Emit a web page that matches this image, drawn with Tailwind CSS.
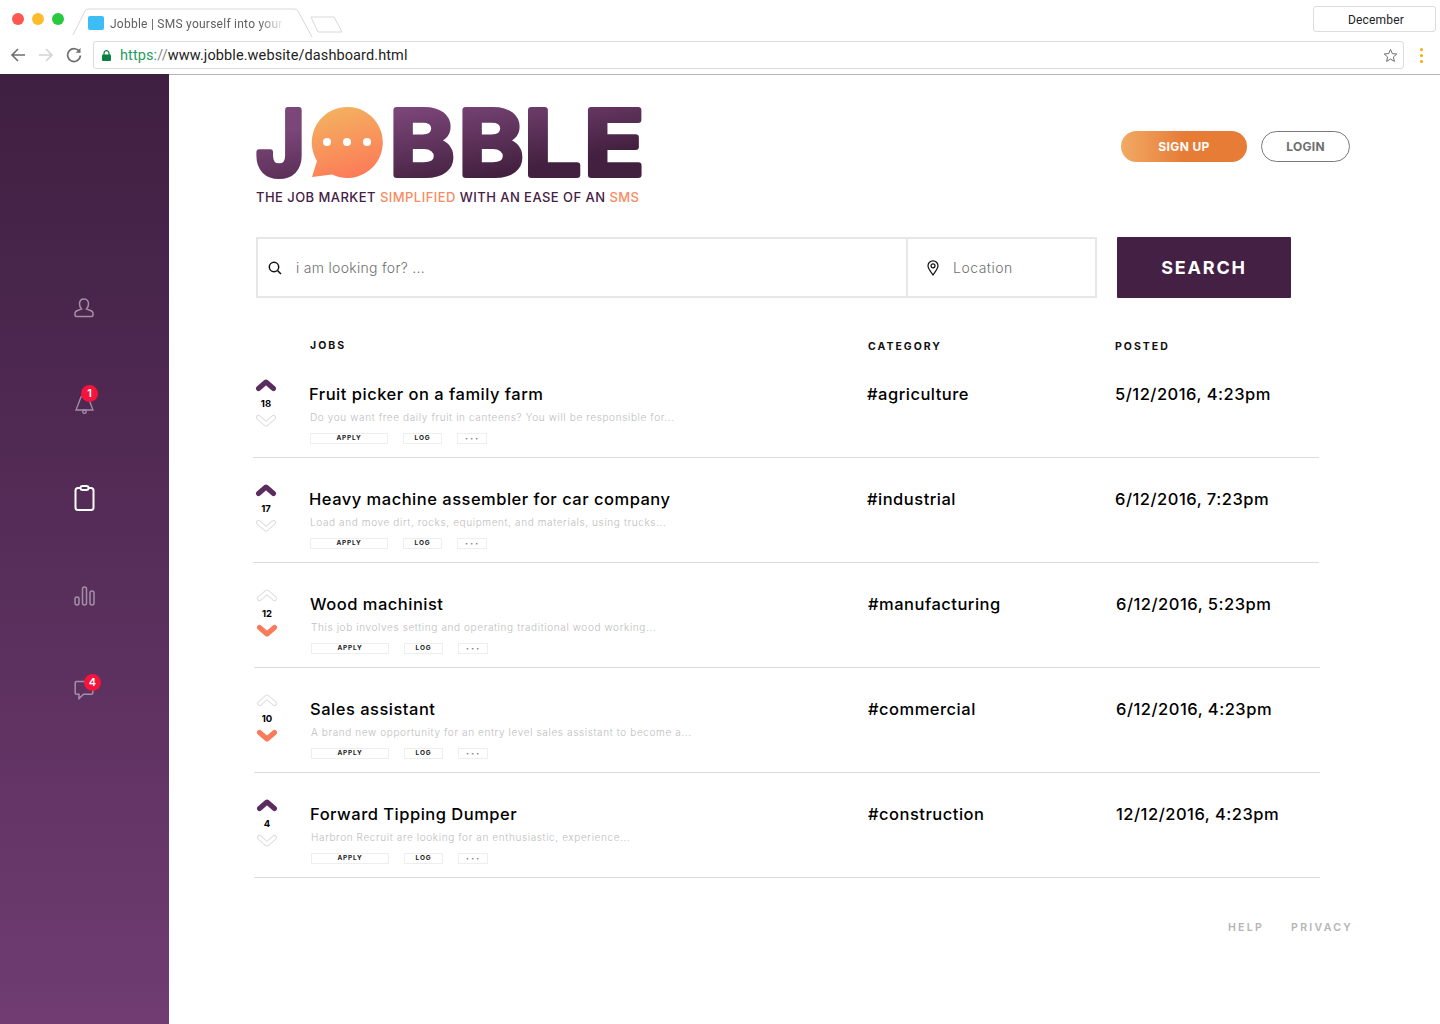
<!DOCTYPE html>
<html lang="en">
<head>
  <meta charset="UTF-8" />
  <title>Jobble | SMS yourself into your next job</title>
  <script src="https://cdn.jsdelivr.net/npm/@tailwindcss/browser@4"></script>
</head>
<body class="bg-white w-[1440px] h-[1024px] overflow-hidden font-['Inter',sans-serif] text-black">

  <!-- browser chrome -->
  <div class="h-[74px] bg-white font-['Roboto',sans-serif]">
    <div class="h-[41px] flex">
      <div class="flex gap-2 pl-3 pt-[13px]">
        <span class="w-3 h-3 rounded-full bg-[#fc5753]"></span>
        <span class="w-3 h-3 rounded-full bg-[#fdbc2c]"></span>
        <span class="w-3 h-3 rounded-full bg-[#2ac840]"></span>
      </div>
      <div class="relative ml-[8px] w-[272px] h-[41px]">
        <svg class="absolute left-0 top-0" width="272" height="41" fill="none" stroke="#d8d8d8">
          <path d="M1 35 L13 11 Q14 9 17 9 L222 9 Q225 9 226 11 L240 37" />
          <path d="M239 17 L262 17 L270 32 L246 32 Z" />
        </svg>
        <div class="absolute left-[16px] top-[16px] w-4 h-[14px] rounded-[2px] bg-[#3cbdf5]"></div>
        <div class="absolute left-[38px] top-[16px] w-[175px] h-4 overflow-hidden whitespace-nowrap text-[12px] leading-[16px] tracking-[0.25px] text-[#5f5f5f] [mask-image:linear-gradient(to_right,black_85%,transparent)]">Jobble | SMS yourself into your</div>
      </div>
      <div class="ml-auto mr-1 mt-[6px] w-[123px] h-[26px] border border-[#dcdcdc] rounded-[3px] flex items-center justify-center pl-[3px] pt-px text-[12px] tracking-[0.2px] text-[#222]">December</div>
    </div>
    <div class="h-[28px] flex items-center">
      <svg class="ml-[10px]" width="16" height="16" viewBox="0 0 16 16" fill="none" stroke="#6e6e6e" stroke-width="1.6"><path d="M15 8 H2 M8 2 L2 8 L8 14" /></svg>
      <svg class="ml-[12px]" width="16" height="16" viewBox="0 0 16 16" fill="none" stroke="#d4d4d4" stroke-width="1.6"><path d="M1 8 H14 M8 2 L14 8 L8 14" /></svg>
      <svg class="ml-[12px]" width="16" height="16" viewBox="0 0 16 16" fill="none" stroke="#6e6e6e" stroke-width="1.7"><path d="M13.6 5 A6.4 6.4 0 1 0 14.4 8.5" /><path d="M14.5 1 V5.8 H9.7" fill="#6e6e6e" stroke="none" /></svg>
      <div class="ml-[11px] w-[1311px] h-[28px] border border-[#dcdcdc] rounded-[3px] flex items-center">
        <svg class="ml-[8px]" width="9" height="11" viewBox="0 0 9 11"><path d="M2 5 V3.2 a2.5 2.5 0 0 1 5 0 V5" fill="none" stroke="#0b8043" stroke-width="1.2" /><rect y="4.5" width="9" height="6.5" rx="1" fill="#0b8043" /></svg>
        <div class="ml-[9px] pt-px text-[14.5px] tracking-[0.1px] text-[#222]"><span class="text-[#1f9d61]">https:</span><span class="text-[#888]">//</span>www.jobble.website/dashboard.html</div>
        <svg class="ml-auto mr-[5px]" width="15" height="15" viewBox="0 0 15 15" fill="none" stroke="#6e6e6e"><path d="M7.5 1.5 L9.3 5.6 L13.8 6 L10.4 9 L11.4 13.4 L7.5 11.1 L3.6 13.4 L4.6 9 L1.2 6 L5.7 5.6 Z" /></svg>
      </div>
      <div class="ml-[16px] flex flex-col gap-[3px]">
        <span class="w-[3px] h-[3px] rounded-full bg-[#f5a800]"></span>
        <span class="w-[3px] h-[3px] rounded-full bg-[#f5a800]"></span>
        <span class="w-[3px] h-[3px] rounded-full bg-[#f5a800]"></span>
      </div>
    </div>
  </div>

  <div class="flex h-[950px]">
    <!-- sidebar -->
    <aside class="w-[169px] shrink-0 bg-gradient-to-b from-[#3e1f41] to-[#703c72] flex flex-col items-center pr-px pt-[214px] text-[#a48fa8]">
      <div class="h-10 w-10 flex items-center justify-center">
        <svg width="20" height="20" viewBox="0 0 20 20" fill="none" stroke="currentColor" stroke-width="1.5"><path d="M10 1 C7 1 5.5 3.2 5.5 6 C5.5 8.5 6.6 10 7.5 11 L3.5 12.5 C2 13 1 14 1 15.5 V17 Q1 18.5 2.5 18.5 H17.5 Q19 18.5 19 17 V15.5 C19 14 18 13 16.5 12.5 L12.5 11 C13.4 10 14.5 8.5 14.5 6 C14.5 3.2 13 1 10 1 Z" /></svg>
      </div>
      <div class="relative h-10 w-10 mt-[54px] flex items-center justify-center">
        <svg class="mt-[3px]" width="19" height="20" viewBox="0 0 19 20" fill="none" stroke="currentColor" stroke-width="1.3"><path d="M6 3 Q9.5 0 13 3 L18 16 H1 Z" /><circle cx="9.5" cy="17.7" r="1.7" /></svg>
        <span class="absolute left-[17px] top-[3px] w-[17px] h-[17px] rounded-full bg-[#f5143c] text-white text-[11px] leading-[17px] font-semibold text-center">1</span>
      </div>
      <div class="h-10 w-10 mt-[56px] flex items-center justify-center text-white">
        <svg width="21" height="26" viewBox="0 0 21 26" fill="none" stroke="currentColor" stroke-width="2"><rect x="1.5" y="3" width="18" height="22" rx="2.5" /><rect x="6.5" y="1" width="8" height="4" rx="2" fill="#55295a" /></svg>
      </div>
      <div class="h-10 w-10 mt-[58px] flex items-center justify-center">
        <svg width="21" height="20" viewBox="0 0 21 20" fill="none" stroke="currentColor" stroke-width="1.5"><rect x="1" y="11" width="4" height="8" rx="2" /><rect x="8.5" y="1" width="4" height="18" rx="2" /><rect x="16" y="5" width="4" height="14" rx="2" /></svg>
      </div>
      <div class="relative h-10 w-10 mt-[54px] flex items-center justify-center">
        <svg width="20" height="20" viewBox="0 0 20 20" fill="none" stroke="currentColor" stroke-width="1.5"><path d="M2.5 1.5 H17.5 Q18.8 1.5 18.8 2.8 V13 Q18.8 14.3 17.5 14.3 H9.5 L5 18.6 V14.3 H2.5 Q1.2 14.3 1.2 13 V2.8 Q1.2 1.5 2.5 1.5 Z" /></svg>
        <span class="absolute left-[20px] top-[4px] w-[17px] h-[17px] rounded-full bg-[#f5143c] text-white text-[11px] leading-[17px] font-semibold text-center">4</span>
      </div>
    </aside>

    <!-- main -->
    <main class="flex-1 border-t border-[#b5b5b5] pl-[85px]">
      <div class="flex items-start justify-between pr-[90px] pl-[2px]">
        <div>
          <svg class="mt-[26px]" width="392" height="80" viewBox="0 0 392 80" role="img" aria-label="Jobble">
            <defs>
              <linearGradient id="word" gradientUnits="userSpaceOnUse" x1="190" y1="0" x2="205" y2="80">
                <stop offset="0" stop-color="#7b4679" />
                <stop offset="1" stop-color="#43203f" />
              </linearGradient>
              <linearGradient id="bubble" x1="0.35" y1="0" x2="0.65" y2="1">
                <stop offset="0" stop-color="#f4b160" />
                <stop offset="1" stop-color="#fc7a58" />
              </linearGradient>
            </defs>
            <g font-family="Inter, sans-serif" font-weight="600" font-size="90" fill="url(#word)" stroke="url(#word)" stroke-width="6" stroke-linejoin="round">
              <text x="0" y="74" textLength="49" lengthAdjust="spacingAndGlyphs">J</text>
              <text x="133.5" y="74" textLength="65" lengthAdjust="spacingAndGlyphs">B</text>
              <text x="202.5" y="74" textLength="65" lengthAdjust="spacingAndGlyphs">B</text>
              <text x="268" y="74" textLength="57" lengthAdjust="spacingAndGlyphs">L</text>
              <text x="328" y="74" textLength="60" lengthAdjust="spacingAndGlyphs">E</text>
            </g>
            <path d="M76 73.5 A35.5 35.5 0 1 0 61 60 L56 76 Z" fill="url(#bubble)" />
            <circle cx="71" cy="41" r="4" fill="#fff" />
            <circle cx="91" cy="41" r="4" fill="#fff" />
            <circle cx="111" cy="41" r="4" fill="#fff" />
          </svg>
          <p class="mt-[8px] text-[13px] leading-4 font-medium tracking-[0.45px] whitespace-nowrap text-[#452045]">THE JOB MARKET <span class="text-[#fb8a60]">SIMPLIFIED</span> WITH AN EASE OF AN <span class="text-[#fb8a60]">SMS</span></p>
        </div>
        <div class="flex gap-[14px] mt-[56px]">
          <button class="w-[126px] h-[31px] rounded-full bg-gradient-to-r from-[#f1aa64] via-[#e67c36] to-[#e67c36] text-white text-[12px] font-bold tracking-[0.4px]">SIGN UP</button>
          <button class="w-[89px] h-[31px] rounded-full border border-[#7a7a7a] text-[#6e6e6e] text-[12px] font-bold tracking-[0.3px]">LOGIN</button>
        </div>
      </div>

      <!-- search -->
      <div class="flex mt-[32px] ml-[2px]">
        <div class="w-[841px] h-[61px] border-2 border-[#e7e7e7] flex">
          <div class="w-[650px] border-r-2 border-[#e7e7e7] flex items-center">
            <svg class="ml-[10px]" width="14" height="14" viewBox="0 0 14 14" fill="none" stroke="#111" stroke-width="1.5"><circle cx="6" cy="6" r="4.7" /><path d="M9.5 9.5 L13 13" /></svg>
            <span class="ml-[14px] text-[14px] font-light tracking-[0.3px] text-[#6f6f6f]">i am looking for? ...</span>
          </div>
          <div class="flex-1 flex items-center">
            <svg class="ml-[19px]" width="12" height="16" viewBox="0 0 12 16" fill="none" stroke="#111" stroke-width="1.2"><path d="M6 15 C4 12 1 8.8 1 5.8 A5 5 0 0 1 11 5.8 C11 8.8 8 12 6 15 Z" /><circle cx="6" cy="5.8" r="2" /></svg>
            <span class="ml-[14px] text-[14px] font-light tracking-[0.5px] text-[#6f6f6f]">Location</span>
          </div>
        </div>
        <button class="ml-[20px] w-[174px] h-[61px] rounded-[1px] bg-[#452045] text-white text-[18px] font-bold tracking-[1.8px]">SEARCH</button>
      </div>

      <div class="w-[1066px]">
        <!-- column heads -->
        <div class="flex mt-[42px] h-[13px] items-center text-[10.5px] font-bold tracking-[2px] text-[#111]">
          <div class="w-[614px] pl-[56px] -mt-[2px]">JOBS</div>
          <div class="w-[247px]">CATEGORY</div>
          <div>POSTED</div>
        </div>

        <!-- row 1 -->
        <div class="flex h-[105px] border-b border-[#dcdcdc] -ml-px mr-px">
          <div class="w-[26px] mr-[30px] pt-[25px] flex flex-col items-center">
            <svg width="22" height="14" viewBox="0 0 22 14" fill="none" stroke-linecap="round" stroke-linejoin="round"><path d="M3.5 10.5 L11 4 L18.5 10.5" stroke="#5a2d5e" stroke-width="5" /></svg>
            <span class="mt-[6px] h-3 text-[9.5px] leading-3 font-bold">18</span>
            <svg class="mt-[4px]" width="22" height="14" viewBox="0 0 22 14" fill="none" stroke-linecap="round" stroke-linejoin="round"><path d="M3.5 3.5 L11 10 L18.5 3.5" stroke="#dedede" stroke-width="5" /><path d="M3.5 3.5 L11 10 L18.5 3.5" stroke="#fff" stroke-width="3" /></svg>
          </div>
          <div class="w-[558px] pt-[30px]">
            <h2 class="h-[22px] text-[16.5px] leading-[22px] font-medium tracking-[0.5px]">Fruit picker on a family farm</h2>
            <p class="mt-[5px] ml-px h-[14px] text-[10px] leading-[14px] font-light tracking-[0.62px] text-[#bdbdbd]">Do you want free daily fruit in canteens? You will be responsible for...</p>
            <div class="mt-[9px] ml-px flex text-[6.5px] font-bold tracking-[0.8px] text-[#222]">
              <span class="w-[78px] h-[11px] border border-[#eee] flex items-center justify-center">APPLY</span>
              <span class="ml-[15px] w-[39px] h-[11px] border border-[#eee] flex items-center justify-center">LOG</span>
              <span class="ml-[15px] w-[30px] h-[11px] border border-[#eee] flex items-center justify-center text-[5px] text-[#777]">• • •</span>
            </div>
          </div>
          <div class="w-[248px] pt-[30px] text-[16.5px] leading-[22px] font-medium tracking-[0.5px]">#agriculture</div>
          <div class="pt-[30px] text-[16.5px] leading-[22px] font-medium tracking-[0.5px]">5/12/2016, 4:23pm</div>
        </div>

        <!-- row 2 -->
        <div class="flex h-[105px] border-b border-[#dcdcdc] -ml-px mr-px">
          <div class="w-[26px] mr-[30px] pt-[25px] flex flex-col items-center">
            <svg width="22" height="14" viewBox="0 0 22 14" fill="none" stroke-linecap="round" stroke-linejoin="round"><path d="M3.5 10.5 L11 4 L18.5 10.5" stroke="#5a2d5e" stroke-width="5" /></svg>
            <span class="mt-[6px] h-3 text-[9.5px] leading-3 font-bold">17</span>
            <svg class="mt-[4px]" width="22" height="14" viewBox="0 0 22 14" fill="none" stroke-linecap="round" stroke-linejoin="round"><path d="M3.5 3.5 L11 10 L18.5 3.5" stroke="#dedede" stroke-width="5" /><path d="M3.5 3.5 L11 10 L18.5 3.5" stroke="#fff" stroke-width="3" /></svg>
          </div>
          <div class="w-[558px] pt-[30px]">
            <h2 class="h-[22px] text-[16.5px] leading-[22px] font-medium tracking-[0.5px]">Heavy machine assembler for car company</h2>
            <p class="mt-[5px] ml-px h-[14px] text-[10px] leading-[14px] font-light tracking-[0.62px] text-[#bdbdbd]">Load and move dirt, rocks, equipment, and materials, using trucks...</p>
            <div class="mt-[9px] ml-px flex text-[6.5px] font-bold tracking-[0.8px] text-[#222]">
              <span class="w-[78px] h-[11px] border border-[#eee] flex items-center justify-center">APPLY</span>
              <span class="ml-[15px] w-[39px] h-[11px] border border-[#eee] flex items-center justify-center">LOG</span>
              <span class="ml-[15px] w-[30px] h-[11px] border border-[#eee] flex items-center justify-center text-[5px] text-[#777]">• • •</span>
            </div>
          </div>
          <div class="w-[248px] pt-[30px] text-[16.5px] leading-[22px] font-medium tracking-[0.5px]">#industrial</div>
          <div class="pt-[30px] text-[16.5px] leading-[22px] font-medium tracking-[0.5px]">6/12/2016, 7:23pm</div>
        </div>

        <!-- row 3 -->
        <div class="flex h-[105px] border-b border-[#dcdcdc]">
          <div class="w-[26px] mr-[30px] pt-[25px] flex flex-col items-center">
            <svg width="22" height="14" viewBox="0 0 22 14" fill="none" stroke-linecap="round" stroke-linejoin="round"><path d="M3.5 10.5 L11 4 L18.5 10.5" stroke="#dedede" stroke-width="5" /><path d="M3.5 10.5 L11 4 L18.5 10.5" stroke="#fff" stroke-width="3" /></svg>
            <span class="mt-[6px] h-3 text-[9.5px] leading-3 font-bold">12</span>
            <svg class="mt-[4px]" width="22" height="14" viewBox="0 0 22 14" fill="none" stroke-linecap="round" stroke-linejoin="round"><path d="M3.5 3.5 L11 10 L18.5 3.5" stroke="#fb7a5a" stroke-width="5" /></svg>
          </div>
          <div class="w-[558px] pt-[30px]">
            <h2 class="h-[22px] text-[16.5px] leading-[22px] font-medium tracking-[0.5px]">Wood machinist</h2>
            <p class="mt-[5px] ml-px h-[14px] text-[10px] leading-[14px] font-light tracking-[0.62px] text-[#bdbdbd]">This job involves setting and operating traditional wood working...</p>
            <div class="mt-[9px] ml-px flex text-[6.5px] font-bold tracking-[0.8px] text-[#222]">
              <span class="w-[78px] h-[11px] border border-[#eee] flex items-center justify-center">APPLY</span>
              <span class="ml-[15px] w-[39px] h-[11px] border border-[#eee] flex items-center justify-center">LOG</span>
              <span class="ml-[15px] w-[30px] h-[11px] border border-[#eee] flex items-center justify-center text-[5px] text-[#777]">• • •</span>
            </div>
          </div>
          <div class="w-[248px] pt-[30px] text-[16.5px] leading-[22px] font-medium tracking-[0.5px]">#manufacturing</div>
          <div class="pt-[30px] text-[16.5px] leading-[22px] font-medium tracking-[0.5px]">6/12/2016, 5:23pm</div>
        </div>

        <!-- row 4 -->
        <div class="flex h-[105px] border-b border-[#dcdcdc]">
          <div class="w-[26px] mr-[30px] pt-[25px] flex flex-col items-center">
            <svg width="22" height="14" viewBox="0 0 22 14" fill="none" stroke-linecap="round" stroke-linejoin="round"><path d="M3.5 10.5 L11 4 L18.5 10.5" stroke="#dedede" stroke-width="5" /><path d="M3.5 10.5 L11 4 L18.5 10.5" stroke="#fff" stroke-width="3" /></svg>
            <span class="mt-[6px] h-3 text-[9.5px] leading-3 font-bold">10</span>
            <svg class="mt-[4px]" width="22" height="14" viewBox="0 0 22 14" fill="none" stroke-linecap="round" stroke-linejoin="round"><path d="M3.5 3.5 L11 10 L18.5 3.5" stroke="#fb7a5a" stroke-width="5" /></svg>
          </div>
          <div class="w-[558px] pt-[30px]">
            <h2 class="h-[22px] text-[16.5px] leading-[22px] font-medium tracking-[0.5px]">Sales assistant</h2>
            <p class="mt-[5px] ml-px h-[14px] text-[10px] leading-[14px] font-light tracking-[0.62px] text-[#bdbdbd]">A brand new opportunity for an entry level sales assistant to become a...</p>
            <div class="mt-[9px] ml-px flex text-[6.5px] font-bold tracking-[0.8px] text-[#222]">
              <span class="w-[78px] h-[11px] border border-[#eee] flex items-center justify-center">APPLY</span>
              <span class="ml-[15px] w-[39px] h-[11px] border border-[#eee] flex items-center justify-center">LOG</span>
              <span class="ml-[15px] w-[30px] h-[11px] border border-[#eee] flex items-center justify-center text-[5px] text-[#777]">• • •</span>
            </div>
          </div>
          <div class="w-[248px] pt-[30px] text-[16.5px] leading-[22px] font-medium tracking-[0.5px]">#commercial</div>
          <div class="pt-[30px] text-[16.5px] leading-[22px] font-medium tracking-[0.5px]">6/12/2016, 4:23pm</div>
        </div>

        <!-- row 5 -->
        <div class="flex h-[105px] border-b border-[#dcdcdc]">
          <div class="w-[26px] mr-[30px] pt-[25px] flex flex-col items-center">
            <svg width="22" height="14" viewBox="0 0 22 14" fill="none" stroke-linecap="round" stroke-linejoin="round"><path d="M3.5 10.5 L11 4 L18.5 10.5" stroke="#5a2d5e" stroke-width="5" /></svg>
            <span class="mt-[6px] h-3 text-[9.5px] leading-3 font-bold">4</span>
            <svg class="mt-[4px]" width="22" height="14" viewBox="0 0 22 14" fill="none" stroke-linecap="round" stroke-linejoin="round"><path d="M3.5 3.5 L11 10 L18.5 3.5" stroke="#dedede" stroke-width="5" /><path d="M3.5 3.5 L11 10 L18.5 3.5" stroke="#fff" stroke-width="3" /></svg>
          </div>
          <div class="w-[558px] pt-[30px]">
            <h2 class="h-[22px] text-[16.5px] leading-[22px] font-medium tracking-[0.5px]">Forward Tipping Dumper</h2>
            <p class="mt-[5px] ml-px h-[14px] text-[10px] leading-[14px] font-light tracking-[0.62px] text-[#bdbdbd]">Harbron Recruit are looking for an enthusiastic, experience...</p>
            <div class="mt-[9px] ml-px flex text-[6.5px] font-bold tracking-[0.8px] text-[#222]">
              <span class="w-[78px] h-[11px] border border-[#eee] flex items-center justify-center">APPLY</span>
              <span class="ml-[15px] w-[39px] h-[11px] border border-[#eee] flex items-center justify-center">LOG</span>
              <span class="ml-[15px] w-[30px] h-[11px] border border-[#eee] flex items-center justify-center text-[5px] text-[#777]">• • •</span>
            </div>
          </div>
          <div class="w-[248px] pt-[30px] text-[16.5px] leading-[22px] font-medium tracking-[0.5px]">#construction</div>
          <div class="pt-[30px] text-[16.5px] leading-[22px] font-medium tracking-[0.5px]">12/12/2016, 4:23pm</div>
        </div>
      </div>

      <footer class="flex justify-end gap-[27px] pr-[87px] mt-[43px] text-[10.5px] leading-[14px] font-semibold tracking-[2.3px] text-[#b4b4b4]">
        <span>HELP</span>
        <span>PRIVACY</span>
      </footer>
    </main>
  </div>
</body>
</html>
